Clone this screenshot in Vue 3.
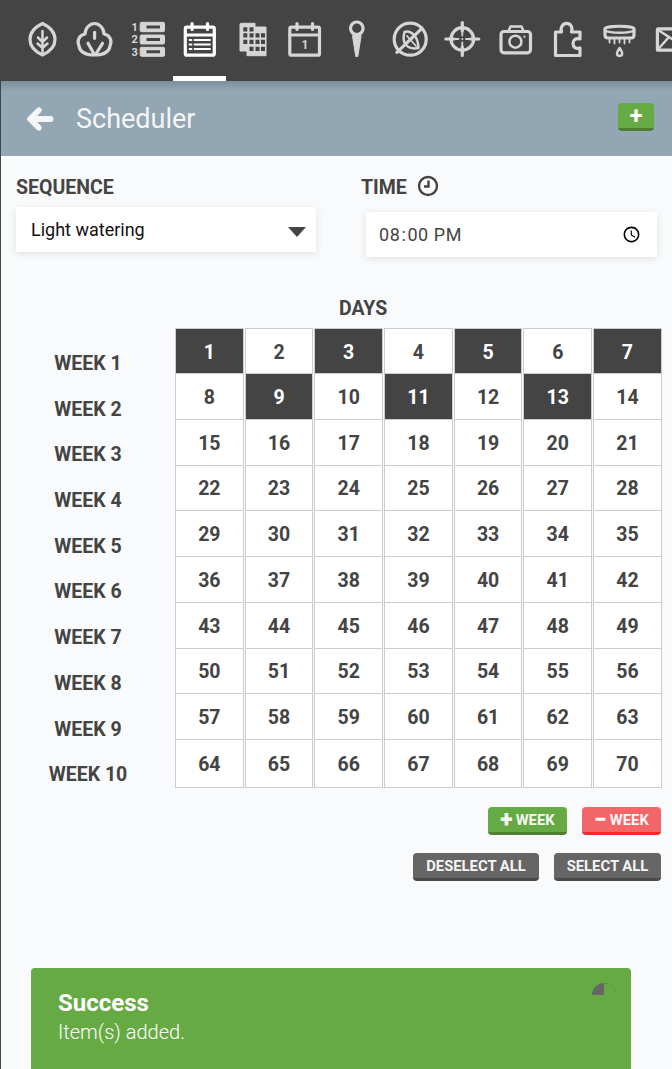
<template>
  <div class="page">
    <nav class="topbar">
      <a class="nav-item">
        <svg viewBox="0 0 52 40"><path d="M26.500 4.500C34 8 39 14 39 20.500S34 32.500 26.500 36C19 32.500 14 27 14 20.500S19 8 26.500 4.500Z" /><path d="M26.500 12V35M26.500 23L22 18.500M26.500 23L31 18.500M26.500 29L21.500 24.500M26.500 29L31.500 24.500" class="mid" /></svg>
      </a>
      <a class="nav-item">
        <svg viewBox="0 0 52 40"><path d="M26.600 36C34 36 41 34 42 27C44.500 22 42 16 36 15C36 9 31 4.500 26.600 4.500C22 4.500 17 9 17 15C11 16 8.700 22 11 27C12 34 19 36 26.600 36Z" /><path d="M26.600 13.300V19.300M20 24.300L25.500 34M34.500 24.300L28.500 34" /></svg>
      </a>
      <a class="nav-item">
        <svg viewBox="0 0 52 40">
          <text x="13.700" y="11.700" class="icon-num">1</text>
          <text x="13.700" y="24.300" class="icon-num">2</text>
          <text x="13.700" y="36.700" class="icon-num">3</text>
          <path d="M19.200 4.500Q19.200 3.300 20.400 3.300H42.300Q43.500 3.300 43.500 4.500V11.500Q43.500 12.700 42.300 12.700H20.400Q19.200 12.700 19.200 11.500ZM19.200 17.200Q19.200 16 20.400 16H42.300Q43.500 16 43.500 17.200V23.800Q43.500 25 42.300 25H20.400Q19.200 25 19.200 23.800ZM19.200 29.500Q19.200 28.300 20.400 28.300H42.300Q43.500 28.300 43.500 29.500V36.100Q43.500 37.300 42.300 37.300H20.400Q19.200 37.300 19.200 36.100Z" class="solid" />
          <path d="M25.500 6.500H39V9.500H25.500ZM25.500 19H39V22H25.500ZM25.500 31.300H39V34.300H25.500Z" class="hole" />
        </svg>
      </a>
      <a class="nav-item active">
        <svg viewBox="0 0 52 40">
          <rect x="12.300" y="8.200" width="29" height="28" rx="1.500" />
          <path d="M12.300 16H41.300" />
          <path d="M19.100 4.500V10.500M34.500 4.500V10.500" />
          <path d="M21.500 21H37M21.500 25.500H37M21.500 30H37M16.500 21H18.500M16.500 25.500H18.500M16.500 30H18.500" class="thin" />
        </svg>
      </a>
      <a class="nav-item">
        <svg viewBox="0 0 52 40">
          <path d="M15 4.300H29V8H40V36.700H21V32H14V5.300Z" class="solid" />
          <path :d="gridHoles" class="hole" />
        </svg>
      </a>
      <a class="nav-item">
        <svg viewBox="0 0 52 40">
          <rect x="11.800" y="8.200" width="29.700" height="28" rx="1.500" />
          <path d="M11.800 16H41.500" />
          <path d="M19 4.500V10.500M34.500 4.500V10.500" />
          <text x="27" y="30.300" class="icon-cal">1</text>
        </svg>
      </a>
      <a class="nav-item">
        <svg viewBox="0 0 52 40">
          <circle cx="26.800" cy="9.300" r="6.300" />
          <path d="M22.500 17L25.800 37.500H27.800L31.100 17Z" class="solid" />
        </svg>
      </a>
      <a class="nav-item">
        <svg viewBox="0 0 52 40">
          <circle cx="27.200" cy="20.200" r="16" />
          <path d="M38.900 9.300L13.900 33.300" />
          <path d="M21.500 13C28 11 35 17 35.500 29C25 31 18 25 21.500 13Z" class="mid" />
          <path d="M24 17L33 27" class="thin" />
        </svg>
      </a>
      <a class="nav-item">
        <svg viewBox="0 0 52 40">
          <circle cx="27.300" cy="20" r="11.300" />
          <path d="M27.300 3.500V12M27.300 28V36.500M10.800 20H19M35.500 20H43.800" />
          <path d="M27.300 13V16.500M27.300 23.500V27M20 20H23.500M31 20H34.500" class="thin" />
          <circle cx="27.300" cy="20" r="1" class="dot" />
        </svg>
      </a>
      <a class="nav-item">
        <svg viewBox="0 0 52 40">
          <rect x="13" y="12.500" width="29.500" height="21.300" rx="3" />
          <path d="M20.500 12L22.500 7.500H33.500L35.500 12" class="mid" />
          <circle cx="27.400" cy="22.700" r="6" class="mid" />
          <circle cx="36.400" cy="17.700" r="1.100" class="dot" />
        </svg>
      </a>
      <a class="nav-item">
        <svg viewBox="0 0 52 40">
          <path d="M15.500 13H21.500C20 8 23 4.300 26.700 4.300S33 8 31.500 13H40V20C36 18.500 33 21 33 24.500S36 30.500 40 29V36.500H15.500Z" />
        </svg>
      </a>
      <a class="nav-item">
        <svg viewBox="0 0 52 40">
          <path d="M13 9.500C13 6.500 42 6.500 42 9.500V16C42 18.500 41 19 39 19H16C14 19 13 18.500 13 16Z" />
          <path d="M13 11.500C18 14.500 37 14.500 42 11.500" class="mid" />
          <path d="M17.500 19V23.500M22.500 19V24.500M27.500 19V23.500M32.500 19V24.500M37.500 19V23.500" class="thin" />
          <path d="M27.600 29C26 31.500 25 32.800 25 34.300A2.600 2.600 0 0 0 30.200 34.300C30.200 32.800 29.200 31.500 27.600 29Z" class="mid" />
        </svg>
      </a>
      <a class="nav-item">
        <svg viewBox="0 0 52 40">
          <rect x="12.400" y="9.800" width="36" height="21.400" rx="1" />
          <path d="M12.400 10.500L30 22L48 10.500M12.400 31L24 18" class="mid" />
        </svg>
      </a>
    </nav>

    <div class="main">
      <header class="title-bar">
        <svg class="back" viewBox="0 0 24 24"><path d="M11 4.500L3.500 12L11 19.500M5 12H21" /></svg>
        <h1>Scheduler</h1>
        <button class="btn btn-green btn-add"><span class="plus">+</span></button>
      </header>

      <section class="fields">
        <div class="field seq">
          <label>SEQUENCE</label>
          <div class="select-box">
            <span>Light watering</span>
            <i class="caret"></i>
          </div>
        </div>
        <div class="field time">
          <label>TIME
            <svg class="clock" viewBox="0 0 22 22"><circle cx="11" cy="11" r="9" /><path d="M11.500 5.500V11.500H7" /></svg>
          </label>
          <input class="time-input" type="time" value="20:00" />
        </div>
      </section>

      <section class="schedule">
        <div class="days-title">DAYS</div>
        <div class="schedule-body">
          <div class="weeks">
            <div v-for="w in 10" :key="w" class="week-label">WEEK {{ w }}</div>
          </div>
          <div class="grid">
            <div v-for="d in 70" :key="d" class="day" :class="{ on: selected.includes(d) }">{{ d }}</div>
          </div>
        </div>
        <div class="actions">
          <button class="btn btn-green btn-week"><b class="sym">+</b>WEEK</button>
          <button class="btn btn-red btn-week"><b class="sym">−</b>WEEK</button>
        </div>
        <div class="actions second">
          <button class="btn btn-grey btn-deselect">DESELECT ALL</button>
          <button class="btn btn-grey btn-select">SELECT ALL</button>
        </div>
      </section>

      <div class="toast">
        <svg class="spinner" viewBox="0 0 26 14"><path d="M13 1V13H1A12 12 0 0 1 13 1Z" class="pie" /><path d="M13 1A12 12 0 0 1 25 11" class="arc" /></svg>
        <div class="toast-title">Success</div>
        <div class="toast-text">Item(s) added.</div>
      </div>
    </div>
  </div>
</template>

<script setup>
// days picked in the schedule
const selected = [1, 3, 5, 7, 9, 11, 13]

// little windows of the stacked sheets icon
const square = (x, y) => `M${x} ${y}h4v4.300h-4z`
let holes = ''
for (const y of [14.300, 20.700, 27.700]) {
  for (const x of [23.500, 29.500, 35]) holes += square(x, y)
}
for (const y of [8.300, 14.300, 20.700]) holes += square(17.300, y)
holes += square(23.500, 8.300)
const gridHoles = holes
</script>

<style>
html, body {
  margin: 0;
  background: #f9fafc;
}
</style>

<style scoped>
.page {
  width: 672px;
  height: 1069px;
  overflow: hidden;
  font-family: Roboto, "Liberation Sans", sans-serif;
  color: #444;
}

.topbar {
  display: flex;
  height: 81px;
  padding-left: 16px;
  background: #444;
  overflow: hidden;
  box-sizing: border-box;
}
.nav-item {
  flex: none;
  width: 52.400px;
  height: 81px;
  padding-top: 19px;
  box-sizing: border-box;
  border-bottom: 5px solid transparent;
}
.nav-item.active {
  border-bottom-color: #fff;
}
.nav-item svg {
  display: block;
  width: 52px;
  height: 40px;
  overflow: visible;
  fill: none;
  stroke: #d6d6d6;
  stroke-width: 3.200;
  stroke-linejoin: round;
  stroke-linecap: round;
}
.nav-item.active svg {
  stroke: #fff;
}
.nav-item svg .mid {
  stroke-width: 2.500;
}
.nav-item svg .thin {
  stroke-width: 1.800;
}
.nav-item svg .solid {
  fill: #d6d6d6;
  stroke: #d6d6d6;
  stroke-width: 1;
}
.nav-item svg .hole {
  fill: #444;
  stroke: none;
}
.nav-item svg .dot {
  fill: #d6d6d6;
  stroke: none;
}
.icon-num,
.icon-cal {
  fill: #d6d6d6;
  stroke: none;
  font-family: Roboto, sans-serif;
  font-weight: 700;
  text-anchor: middle;
}
.icon-num {
  font-size: 11px;
}
.icon-cal {
  font-size: 12px;
}

.main {
  border-left: 1px solid #444;
  height: 988px;
}

.title-bar {
  display: flex;
  align-items: center;
  height: 75px;
  padding: 0 18px 0 25px;
  background: linear-gradient(#7c8f9c, #92a6b4 10px);
  box-sizing: border-box;
}
.back {
  width: 28px;
  height: 28px;
  fill: none;
  stroke: #f5f5f5;
  stroke-width: 5;
  stroke-linecap: round;
  stroke-linejoin: round;
}
h1 {
  margin: 0 0 0 22px;
  font-size: 27px;
  font-weight: 400;
  color: #f5f5f5;
}

.btn {
  height: 28px;
  padding: 0 12px;
  border: 0;
  border-bottom: 3px solid;
  border-radius: 4px;
  font-family: inherit;
  font-size: 14.800px;
  font-weight: 700;
  color: #f5f5f5;
  white-space: nowrap;
}
.btn-green {
  background: #66aa44;
  border-bottom-color: #4d8033;
}
.btn-red {
  background: #f26668;
  border-bottom-color: #ee2c2e;
}
.btn-grey {
  background: #666;
  border-bottom-color: #4a4a4a;
}
.btn-add {
  margin-left: auto;
  width: 36px;
  margin-top: -3px;
  padding: 0;
}
.plus {
  display: block;
  font-size: 24px;
  font-weight: 700;
  line-height: 22px;
  color: #fff;
}
.btn-week {
  width: 79px;
  padding: 0;
}
.btn-deselect {
  width: 126px;
  padding: 0;
}
.btn-select {
  width: 107px;
  padding: 0;
}
.sym {
  font-size: 23px;
  line-height: 14px;
  margin-right: 3px;
  vertical-align: -2px;
}

.fields {
  display: flex;
  height: 125px;
  padding-left: 15px;
  padding-top: 19px;
  box-sizing: border-box;
}
.field label {
  display: flex;
  align-items: center;
  gap: 10px;
  height: 24px;
  font-size: 19.500px;
  font-weight: 700;
  color: #444;
}
.seq {
  width: 345px;
}
.select-box {
  display: flex;
  align-items: center;
  justify-content: space-between;
  width: 300px;
  height: 45px;
  margin-top: 8px;
  padding: 0 10px 0 15px;
  box-sizing: border-box;
  background: #fff;
  box-shadow: 0 2px 8px rgba(0, 0, 0, 0.1);
  font-size: 18px;
  color: #111;
}
.caret {
  width: 0;
  height: 0;
  margin-top: 5px;
  border-left: 9px solid transparent;
  border-right: 9px solid transparent;
  border-top: 10px solid #444;
}
.clock {
  width: 22px;
  height: 22px;
  margin-top: -3px;
  fill: none;
  stroke: #444;
  stroke-width: 2.400;
}
.time-input {
  display: block;
  width: 291px;
  height: 45px;
  margin: 13px 0 0 5px;
  padding: 0 13px 0 12px;
  box-sizing: border-box;
  border: 0;
  background: #fff;
  box-shadow: 0 2px 8px rgba(0, 0, 0, 0.1);
  font-family: inherit;
  font-size: 18px;
  letter-spacing: 0.600px;
  color: #444;
}

.schedule {
  padding-top: 15px;
}
.days-title {
  height: 32px;
  padding-left: 338px;
  font-size: 19.500px;
  font-weight: 700;
  line-height: 26px;
}
.schedule-body {
  display: flex;
  padding-left: 8px;
}
.weeks {
  width: 158px;
  height: 460px;
  margin-right: 8px;
  padding-top: 13px;
  box-sizing: border-box;
}
.week-label {
  height: 45.700px;
  font-size: 19.500px;
  font-weight: 700;
  line-height: 45.700px;
  text-align: center;
  color: #444;
}
.grid {
  display: grid;
  grid-template-columns: repeat(7, 68.700px);
  grid-template-rows: 46.050px repeat(8, 45.750px) 48px;
  column-gap: 1px;
}
.day {
  display: flex;
  align-items: center;
  justify-content: center;
  padding-top: 2px;
  box-sizing: border-box;
  background: #fff;
  border: 1px solid #ccc;
  border-top: 0;
  font-size: 19.500px;
  font-weight: 700;
}
.day:nth-child(-n + 7) {
  border-top: 1px solid #ccc;
}
.day.on {
  background: #444;
  color: #fff;
}
.actions {
  display: flex;
  justify-content: flex-end;
  gap: 15px;
  margin-top: 19px;
  padding-right: 11px;
}
.second {
  margin-top: 18px;
}

.toast {
  position: relative;
  width: 600px;
  height: 140px;
  margin: 87px 0 0 30px;
  padding: 21px 27px;
  box-sizing: border-box;
  background: #66aa44;
  border-radius: 4px;
  color: #fff;
}
.spinner {
  position: absolute;
  top: 14px;
  left: 560px;
  width: 26px;
  height: 14px;
}
.pie {
  fill: #666;
}
.arc {
  fill: none;
  stroke: #5a9a3c;
  stroke-width: 1;
}
.toast-title {
  font-size: 24px;
  font-weight: 700;
  line-height: 28px;
}
.toast-text {
  font-size: 20px;
  font-weight: 300;
  line-height: 30px;
}
</style>
